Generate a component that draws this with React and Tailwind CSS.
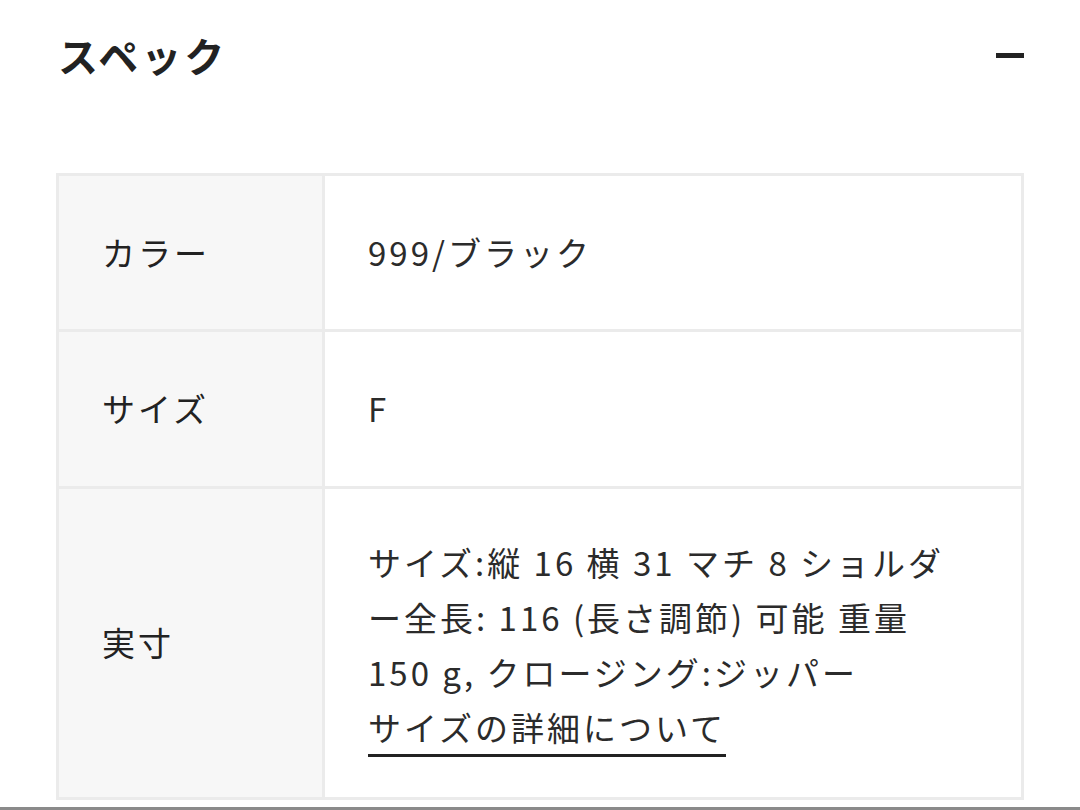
import React from 'react';

var FONT = { fontFamily: '"Noto Sans CJK JP", "Noto Sans", sans-serif' };

function Row(props) {
  return (
    <div className={'grid grid-cols-[263px_1fr] gap-[3px] ' + props.h}>
      <div className="bg-[#f7f7f7] flex items-center pl-[43px] text-[33px] tracking-[3px] text-[#222]">
        {props.label}
      </div>
      <div className="bg-white flex items-center pl-[43px] pr-[70px] text-[33px] tracking-[3px] text-[#2b2b2b]">
        {props.children}
      </div>
    </div>
  );
}

export default function App() {
  return (
    <div className="w-[1080px] h-[810px] bg-white overflow-hidden flex flex-col" style={FONT}>
      <div className="px-[56px]">
        <div className="h-[110px] flex items-center justify-between">
          <h2 className="text-[40px] font-bold tracking-[3px] text-[#222] pl-[2px]">スペック</h2>
          <div className="w-[28px] h-[5px] bg-[#222]" />
        </div>

        <div className="mt-[63px] bg-[#ebebeb] p-[3px] flex flex-col gap-[3px]">
          <Row h="h-[153px]" label="カラー">999/ブラック</Row>
          <Row h="h-[154px]" label="サイズ">F</Row>
          <Row h="h-[308px]" label="実寸">
            <div className="pt-[6px]">
              <p className="leading-[55px]">
                サイズ:縦 16 横 31 マチ 8 ショルダー全長: 116 (長さ調節) 可能 重量 150 g, クロージング:ジッパー
              </p>
              <a className="inline-block leading-[54px] border-b-[3px] border-[#222]">
                サイズの詳細について
              </a>
            </div>
          </Row>
        </div>
      </div>
      <div className="mt-[7px] h-[3px] bg-[#8a8a8a]" />
    </div>
  );
}
